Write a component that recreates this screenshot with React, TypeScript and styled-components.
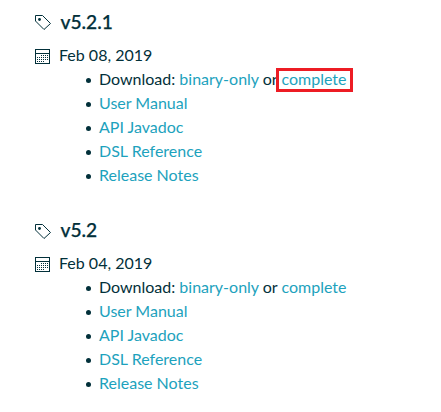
import React from "react";
import styled, { createGlobalStyle } from "styled-components";

const ink = "#02303a";

const GlobalStyle = createGlobalStyle`
  body {
    margin: 0;
    background: #fff;
    color: ${ink};
    font: 16px/24px Lato, sans-serif;
  }
`;

const Page = styled.main`
  padding: 10px 0 0 35px;
  display: flex;
  flex-direction: column;
  gap: 31px;
`;

const Release = styled.section`
  height: 177px;
`;

const Heading = styled.h3`
  display: flex;
  align-items: center;
  gap: 9.5px;
  margin: 0 0 9px;
  font-size: 19.2px;
  line-height: 24px;
  font-weight: 500;
  -webkit-text-stroke: 0.25px ${ink};
`;

const DateRow = styled.div`
  display: flex;
  align-items: center;
  gap: 9px;
`;

const TagSvg = styled.svg<{ $drop: number }>`
  flex: none;
  width: 16px;
  height: 16px;
  margin-top: ${(p) => p.$drop * 2}px;
`;

const CalendarSvg = styled.svg`
  flex: none;
  width: 15px;
  height: 15px;
  margin-top: 3px;
`;

const Links = styled.ul`
  margin: 0;
  padding: 0 0 0 51px;
  list-style: none;
`;

const Item = styled.li`
  &::before {
    content: "";
    display: inline-block;
    width: 5px;
    height: 5px;
    margin-right: 8px;
    border-radius: 50%;
    background: ${ink};
    vertical-align: 2px;
  }
`;

const Link = styled.a<{ $marked?: boolean }>`
  position: relative;
  color: #1da2bd;
  text-decoration: none;

  &::after {
    content: ${(p) => (p.$marked ? '""' : "none")};
    position: absolute;
    inset: -1px -7px -4px -5px;
    border: 3px solid #ed1c24;
  }
`;

const TagIcon = ({ drop }: { drop: number }) => (
  <TagSvg $drop={drop} viewBox="0 0 16 16" fill="none" stroke={ink}>
    <path d="M.5 1.5h7l8 8-6.5 6-8.5-8.5z" />
    <circle cx="4.5" cy="5.5" r="1.4" fill={ink} stroke="none" />
  </TagSvg>
);

const dotRows = [
  { y: 6, from: 6, to: 12 },
  { y: 8, from: 2, to: 12 },
  { y: 10, from: 2, to: 12 },
  { y: 12, from: 2, to: 8 },
];

const CalendarIcon = () => (
  <CalendarSvg viewBox="0 0 15 15" fill="none" stroke={ink} shapeRendering="crispEdges">
    <path d="M.5 .5h14v14H.5zM1 4.5h13" />
    {dotRows.map((r) => (
      <path key={r.y} d={`M${r.from} ${r.y + 0.5}H${r.to + 1}`} strokeDasharray="1 1" />
    ))}
  </CalendarSvg>
);

const releases = [
  { version: "v5.2.1", date: "Feb 08, 2019", marked: true, drop: 0 },
  { version: "v5.2", date: "Feb 04, 2019", marked: false, drop: 1 },
];
const docs = ["User Manual", "API Javadoc", "DSL Reference", "Release Notes"];

export default function App() {
  return (
    <>
      <GlobalStyle />
      <Page>
        {releases.map((r) => (
          <Release key={r.version}>
            <Heading>
              <TagIcon drop={r.drop} />
              {r.version}
            </Heading>
            <DateRow>
              <CalendarIcon />
              {r.date}
            </DateRow>
            <Links>
              <Item>
                Download: <Link href="#">binary-only</Link> or{" "}
                <Link href="#" $marked={r.marked}>complete</Link>
              </Item>
              {docs.map((d) => (
                <Item key={d}>
                  <Link href="#">{d}</Link>
                </Item>
              ))}
            </Links>
          </Release>
        ))}
      </Page>
    </>
  );
}
